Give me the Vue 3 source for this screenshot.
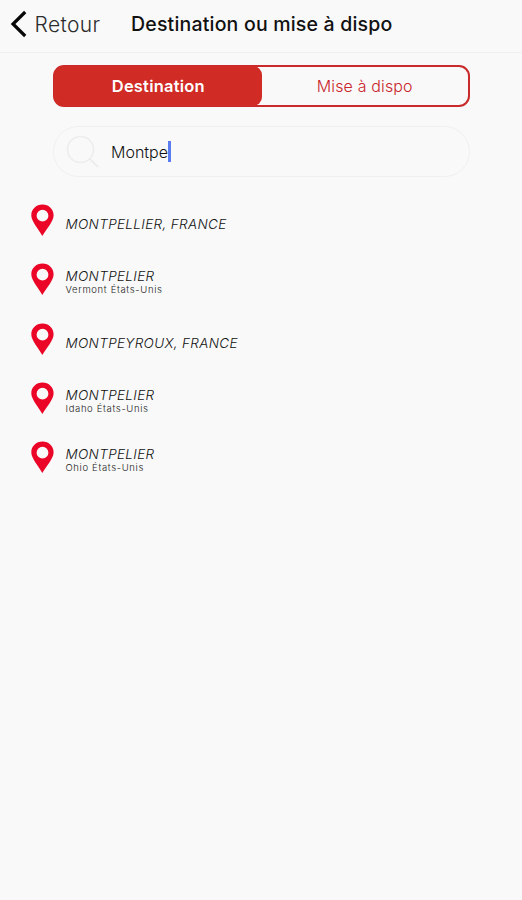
<script setup>
import { ref } from 'vue';

const tabs = ['Destination', 'Mise à dispo'];
const activeTab = ref(0);
const search = ref('Montpe');

const places = [
  { name: 'MONTPELLIER, FRANCE', detail: '' },
  { name: 'MONTPELIER', detail: 'Vermont États-Unis' },
  { name: 'MONTPEYROUX, FRANCE', detail: '' },
  { name: 'MONTPELIER', detail: 'Idaho États-Unis' },
  { name: 'MONTPELIER', detail: 'Ohio États-Unis' },
];
</script>

<template>
  <div class="screen">
    <header class="header">
      <a class="back">
        <svg class="chevron" width="18" height="28" viewBox="0 0 18 28">
          <path d="M15.2 2 L3 14 L15.2 26" fill="none" stroke="#080808" stroke-width="3.2" />
        </svg>
        <span class="back-label">Retour</span>
      </a>
      <h1 class="title">Destination ou mise à dispo</h1>
    </header>

    <div class="tabs">
      <button
        v-for="(tab, i) in tabs"
        :key="tab"
        class="tab"
        :class="{ active: activeTab === i }"
        @click="activeTab = i"
      >
        <span>{{ tab }}</span>
      </button>
    </div>

    <div class="search">
      <svg class="search-icon" width="34" height="34" viewBox="0 0 34 34">
        <circle cx="14.5" cy="14.5" r="13" fill="none" stroke="#ededed" stroke-width="1.6" />
        <path d="M23.5 23.5 L32 32" stroke="#ededed" stroke-width="1.8" />
      </svg>
      <span class="search-text">{{ search }}</span>
      <span class="caret"></span>
    </div>

    <ul class="places">
      <li v-for="(place, i) in places" :key="i" class="place">
        <svg class="pin" width="23" height="32" viewBox="0 0 23 32">
          <path
            fill="#eb0526"
            fill-rule="evenodd"
            d="M11.5 0.4 C5.1 0.4 0.3 5.2 0.3 11.2 C0.3 17.5 7.2 24.5 11.3 32 C15.8 24.5 22.6 17.5 22.6 11.2 C22.6 5.2 17.9 0.4 11.5 0.4 Z M11.5 5.8 A5.9 5.9 0 1 1 11.5 17.6 A5.9 5.9 0 1 1 11.5 5.8 Z"
          />
        </svg>
        <div class="place-text" :class="{ single: !place.detail }">
          <span class="name">{{ place.name }}</span>
          <span v-if="place.detail" class="detail">{{ place.detail }}</span>
        </div>
      </li>
    </ul>
  </div>
</template>

<style>
body {
  background-color: #f9f9f9;
}
</style>

<style scoped>
.screen {
  min-height: 900px;
  background-color: #f9f9f9;
  font-family: Inter, "Liberation Sans", sans-serif;
  color: #111;
}

.header {
  display: flex;
  box-sizing: border-box;
  height: 53px;
  padding: 10px 0 0 10px;
  border-bottom: 1px solid #f0f0f0;
}

.back {
  display: flex;
  width: 121px;
}

.back-label {
  margin-left: 6.5px;
  font-size: 21px;
  line-height: 30px;
  font-weight: 300;
  letter-spacing: 0.4px;
  color: #2c2c2c;
}

.title {
  margin: 0;
  font-size: 19.5px;
  line-height: 28px;
  font-weight: 500;
  letter-spacing: 0.19px;
  white-space: nowrap;
}

.tabs {
  display: flex;
  box-sizing: border-box;
  width: 417px;
  height: 42px;
  margin: 12px 0 0 53px;
  border: 2px solid #c92a2b;
  border-radius: 11px;
}

.tab {
  flex: 1;
  padding: 0;
  border: none;
  background: none;
  font-family: inherit;
  font-size: 16px;
  font-weight: 300;
  letter-spacing: 0.15px;
  color: #c9252b;
}

.tab.active {
  margin: -1px 0 -1px -1px;
  padding-left: 1px;
  border-radius: 9px;
  background-color: #d02b25;
  font-size: 16.5px;
  font-weight: 600;
  letter-spacing: 0.2px;
  color: #fff;
}

.search {
  display: flex;
  align-items: center;
  box-sizing: border-box;
  width: 417px;
  height: 51px;
  margin: 19px 0 0 53px;
  padding-left: 12px;
  border: 1px solid #f0f0f0;
  border-radius: 26px;
}

.search-text {
  margin-left: 11px;
  font-size: 16px;
  font-weight: 300;
}

.caret {
  width: 3px;
  height: 21px;
  background-color: #5b7cf0;
}

.places {
  margin: 27px 0 0;
  padding: 0 0 0 31px;
  list-style: none;
}

.place {
  display: flex;
  height: 59.3px;
}

.place-text {
  display: flex;
  flex-direction: column;
  margin-left: 11.5px;
  padding-top: 4.2px;
}

.place-text.single {
  padding-top: 11.2px;
}

.name {
  font-size: 13.5px;
  line-height: 18px;
  font-style: italic;
  font-weight: 300;
  letter-spacing: 0.35px;
}

.detail {
  font-size: 9.5px;
  line-height: 10px;
  font-weight: 300;
  letter-spacing: 0.65px;
  color: #222;
}
</style>
